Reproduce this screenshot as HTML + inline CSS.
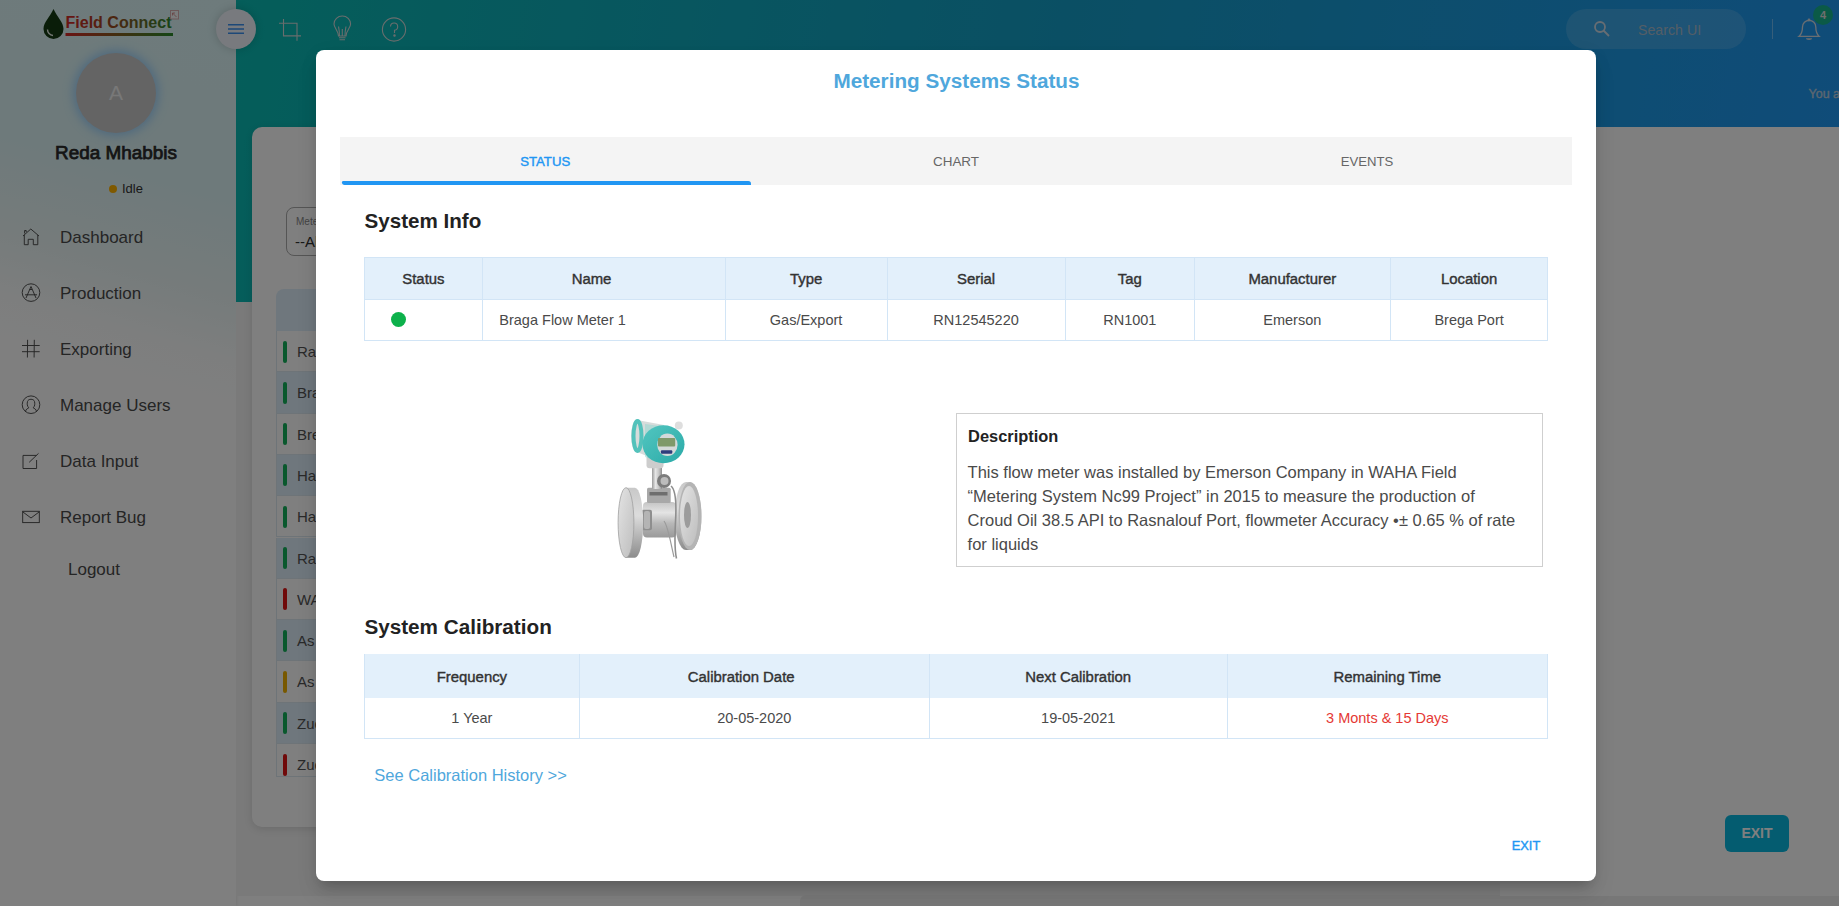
<!DOCTYPE html>
<html><head><meta charset="utf-8">
<style>
*{box-sizing:border-box;margin:0;padding:0}
html,body{width:1839px;height:906px;overflow:hidden;font-family:"Liberation Sans",sans-serif;background:#fff;position:relative}
.abs,.r,.t{position:absolute}
.t{line-height:1;white-space:nowrap}
#side{left:0;top:0;width:236px;height:906px;background:linear-gradient(196deg,#dcf6f8 0px,#dcf4f6 190px,#ecf7f7 290px,#fbfdfd 350px,#fff 400px,#fff 932px);box-shadow:1px 0 3px rgba(0,0,0,.08)}
#hdr{left:236px;top:0;width:1603px;height:302px;background:linear-gradient(100deg,#0abcb4 0%,#159fc8 50%,#2098f4 100%)}
#card{left:252px;top:127px;width:1300px;height:700px;background:#fff;border-radius:10px;box-shadow:0 2px 8px rgba(0,0,0,.12)}
#overlay{left:0;top:0;width:1839px;height:906px;background:rgba(0,0,0,.5)}
#modal{left:316px;top:50px;width:1280px;height:831px;background:#fff;border-radius:8px;box-shadow:0 9px 12px -6px rgba(0,0,0,.18),0 14px 22px 0 rgba(0,0,0,.08),0 4px 20px 0 rgba(0,0,0,.05)}
.nav{position:absolute;left:0;width:236px;height:30px;font-size:17px;color:#4a4a4a}
.nav span{position:absolute;left:60px;top:5px}
.nav svg{position:absolute;left:21px;top:5px}
.brow{position:absolute;left:276px;width:1250px;border-bottom:1px solid #dde8f0;border-left:1px solid #dde8f0}
.brow.alt{background:#deeefa}
.brow i{position:absolute;left:6px;top:9.5px;width:4px;height:22px;border-radius:2px;background:#0b8a45}
.brow span{position:absolute;left:20px;top:12px;font-size:15px;color:#555}
</style></head><body>
<div id="side" class="abs">
  <svg class="abs" style="left:0;top:0" width="236" height="50" viewBox="0 0 236 50">
    <defs><linearGradient id="ul" x1="0" x2="1"><stop offset="0" stop-color="#d42828"/><stop offset=".45" stop-color="#8a5a20"/><stop offset="1" stop-color="#2a8a2a"/></linearGradient>
    <linearGradient id="tx" gradientUnits="userSpaceOnUse" x1="65" x2="172" y1="0" y2="0"><stop offset="0" stop-color="#d42828"/><stop offset=".45" stop-color="#9a4a20"/><stop offset="1" stop-color="#2f8a2f"/></linearGradient></defs>
    <path d="M53.5 9 C 50 17, 43.5 22, 43.5 29 A 10 10 0 0 0 63.5 29 C 63.5 22, 57 17, 53.5 9 Z" fill="#153a12"/>
    <path d="M47.5 29.5 A 6 6 0 0 0 53 35.5" stroke="#e8f0e8" stroke-width="1.4" fill="none"/>
    <text x="65.5" y="28" font-family="Liberation Sans" font-weight="bold" font-size="16" textLength="106" lengthAdjust="spacingAndGlyphs" fill="url(#tx)">Field Connect</text>
    <rect x="65.5" y="33" width="107.5" height="3" fill="url(#ul)"/>
    <rect x="170.5" y="10.5" width="8" height="8.5" fill="#f4f8f8" stroke="#d8b0b0" stroke-width="1"/>
    <path d="M172.5 13 L176.5 17 M172.5 13 H175 M172.5 13 V15.5" stroke="#d08080" stroke-width=".8" fill="none"/>
  </svg>
  <div class="abs" style="left:76px;top:53px;width:80px;height:80px;border-radius:50%;background:#c8c8c8;box-shadow:0 0 10px 3px rgba(120,190,255,.6);color:#f0f0f0;font-size:21px;text-align:center;line-height:80px">A</div>
  <div class="abs" style="left:0;top:142px;width:232px;text-align:center;font-size:18.9px;font-weight:normal;-webkit-text-stroke:0.75px #2a2a2a;color:#2a2a2a">Reda Mhabbis</div>
  <div class="abs" style="left:109px;top:185px;width:8px;height:8px;border-radius:50%;background:#ffb300"></div>
  <div class="abs" style="left:122px;top:181px;font-size:13px;color:#333">Idle</div>
  <svg class="abs" style="left:0;top:220px" width="60" height="310" viewBox="0 220 60 310" fill="none" stroke="#4a4a4a" stroke-width="0.95">
    <path d="M23 236 L30.8 229 L39 236 M24.3 235 V244.7 H28.2 V239.3 H33.3 V244.7 H37.8 V235 M24.6 233.5 V230.5 H26.2 V232"/>
    <circle cx="31" cy="292.6" r="8.8"/><path d="M26 298 L31 286.5 L36 298 M25 294.8 H37 M29.5 289.5 L32 289.5"/>
    <path d="M27.6 339.8 L27.4 357.5 M34.3 339.8 L34.1 357.5 M22 345.5 H39.7 M22 351.7 H39.7"/>
    <circle cx="31" cy="404.7" r="8.8"/><path d="M25.5 411.8 C 25.5 409, 28 408.5, 28.8 407.8 C 27 406, 27 403.8, 27.5 401.5 C 28.2 398.5, 33.8 398.5, 34.5 401.5 C 35 403.8, 35 406, 33.2 407.8 C 34 408.5, 36.5 409, 36.5 411.8"/>
    <path d="M36.5 455.4 H23 V468.5 H36.6 V460 M29.2 462.3 L38.5 453.4"/>
    <rect x="22.7" y="511.3" width="16.6" height="11.3"/><path d="M22.7 511.8 L31 518 L39.3 511.8"/>
  </svg>
  <div class="nav" style="top:223px"><span>Dashboard</span></div>
  <div class="nav" style="top:279px"><span>Production</span></div>
  <div class="nav" style="top:335px"><span>Exporting</span></div>
  <div class="nav" style="top:391px"><span>Manage Users</span></div>
  <div class="nav" style="top:447px"><span>Data Input</span></div>
  <div class="nav" style="top:503px"><span>Report Bug</span></div>
  <div class="nav" style="top:555px"><span style="left:68px">Logout</span></div>
</div>

<div class="abs" style="left:236px;top:127px;width:1603px;height:769px;background:#f4f4f4"></div>
<div class="abs" style="left:800px;top:895px;width:1039px;height:11px;background:#eeeeee;border-radius:6px 0 0 0"></div>
<div class="abs" style="left:236px;top:0;width:1603px;height:302px;background:linear-gradient(100deg,#0abcb4 0%,#159fc8 50%,#2098f4 100%)"></div>
<div class="abs" style="left:1500px;top:127px;width:339px;height:769px;background:#fff"></div>
<div class="abs" style="left:216px;top:9px;width:40px;height:40px;border-radius:50%;background:#f0f5fc;box-shadow:0 0 10px rgba(0,0,0,.18)"></div>
<svg class="abs" style="left:228px;top:23px" width="16" height="12" viewBox="0 0 16 12"><path d="M0 1.8H16M0 6H16M0 10.2H16" stroke="#3a90f0" stroke-width="1.6"/></svg>
<svg class="abs" style="left:270px;top:10px" width="40" height="40" viewBox="270 10 40 40" fill="none" stroke="#d2dada" stroke-width="1.1"><path d="M283.5 19 V35.9 H301 M279 23.3 H297 V40.7"/></svg>
<svg class="abs" style="left:325px;top:10px" width="40" height="40" viewBox="325 10 40 40" fill="none" stroke="#d2dada" stroke-width="1.1"><path d="M338.5 36 C338.5 31 334 28 334 24 A8.3 8 0 0 1 350.6 24 C350.6 28 346 31 346 36 Z"/><path d="M339.5 36 C339.5 31 339 29 338.5 26.5 M345 36 C345 31 345.5 29 346 26.5 M342.3 36 V29"/><path d="M339 37.8 H345.5 M339.5 39.8 H345"/></svg>
<svg class="abs" style="left:375px;top:10px" width="40" height="40" viewBox="375 10 40 40" fill="none" stroke="#d2dada" stroke-width="1.1"><circle cx="394" cy="29.5" r="11.6"/><path d="M390.5 26.5 A3.6 3.6 0 1 1 394.5 30.2 V33"/><circle cx="394.5" cy="35.6" r="0.7" fill="#d2dada"/></svg>
<div class="abs" style="left:1566px;top:9px;width:180px;height:40px;border-radius:20px;background:rgba(255,255,255,.14)"></div>
<svg class="abs" style="left:1593px;top:20px" width="18" height="18" viewBox="0 0 18 18" fill="none" stroke="#cfdbe6" stroke-width="1.8"><circle cx="7" cy="7" r="5"/><path d="M10.5 10.5 L16 16"/></svg>
<div class="abs" style="left:1638px;top:22px;font-size:14.2px;color:#a8bccd">Search UI</div>
<div class="abs" style="left:1772px;top:19px;width:1px;height:20px;background:rgba(255,255,255,.35)"></div>
<svg class="abs" style="left:1790px;top:12px" width="36" height="34" viewBox="1790 12 36 34" fill="none" stroke="#d4dce4" stroke-width="1.3"><path d="M1798.9 36.4 H1819.2 C1816.5 34, 1815.8 31, 1815.8 27 A6.65 6.6 0 0 0 1802.5 27 C1802.5 31, 1801.8 34, 1798.9 36.4 Z"/><circle cx="1809" cy="20" r=".8" fill="#d4dce4"/><path d="M1806 38.2 H1812 A3 1.7 0 0 1 1806 38.2 Z" fill="#d4dce4" stroke="none"/></svg>
<div class="abs" style="left:1813px;top:5px;width:20px;height:20px;border-radius:50%;background:#16b48e;color:#ddd;font-size:11px;font-weight:bold;text-align:center;line-height:20px">4</div>
<div class="abs" style="left:1808.5px;top:87px;font-size:12.5px;color:#b8cde0;-webkit-text-stroke:0.4px #b8cde0;white-space:nowrap">You are</div>
<div id="card" class="abs"></div>
<!-- background content -->
<div class="abs" style="left:286px;top:207px;width:200px;height:49px;border:1px solid #aaa;border-radius:8px"></div>
<div class="abs" style="left:296px;top:216px;font-size:10px;color:#888">Meter</div>
<div class="abs" style="left:295px;top:233px;font-size:15px;color:#333">--All</div>
<div class="abs" style="left:1725px;top:815px;width:64px;height:37px;border-radius:6px;background:#08b8e0;color:#fff;font-size:14px;font-weight:bold;text-align:center;line-height:37px">EXIT</div>

<div class="abs" style="left:276px;top:289px;width:1250px;height:42px;background:#deeefa;border-radius:8px 8px 0 0"></div>
<div class="brow" style="top:331.0px;height:41.3px"><i style="background:#12b05a"></i><span>Ras</span></div>
<div class="brow alt" style="top:372.3px;height:41.3px"><i style="background:#12b05a"></i><span>Bra</span></div>
<div class="brow" style="top:413.6px;height:41.3px"><i style="background:#12b05a"></i><span>Bre</span></div>
<div class="brow alt" style="top:454.9px;height:41.3px"><i style="background:#12b05a"></i><span>Har</span></div>
<div class="brow" style="top:496.2px;height:41.3px"><i style="background:#12b05a"></i><span>Har</span></div>
<div class="brow alt" style="top:537.5px;height:41.3px"><i style="background:#12b05a"></i><span>Ras</span></div>
<div class="brow" style="top:578.8px;height:41.3px"><i style="background:#e01414"></i><span>WA</span></div>
<div class="brow alt" style="top:620.1px;height:41.3px"><i style="background:#12b05a"></i><span>As</span></div>
<div class="brow" style="top:661.4px;height:41.3px"><i style="background:#f0b000"></i><span>As</span></div>
<div class="brow alt" style="top:702.7px;height:41.3px"><i style="background:#12b05a"></i><span>Zue</span></div>
<div class="brow" style="top:744.0px;height:33px"><i style="background:#e01414"></i><span>Zue</span></div>

<div id="overlay" class="abs"></div>
<div id="modal" class="abs"></div>
<div class="t" style="left:556.5px;width:800px;text-align:center;top:71.08px;font-size:20.7px;font-weight:bold;color:#4fa7dc;">Metering Systems Status</div>
<div class="r" style="left:340px;top:137px;width:1232px;height:48px;background:#f4f4f4"></div>
<div class="r" style="left:342px;top:181px;width:409px;height:4px;background:#2196f3;border-radius:2px 4px 0 4px"></div>
<div class="t" style="left:145.2px;width:800px;text-align:center;top:154.73px;font-size:13.2px;font-weight:normal;color:#2196f3;-webkit-text-stroke:0.4px #2196f3;">STATUS</div>
<div class="t" style="left:556.0px;width:800px;text-align:center;top:154.51px;font-size:13.45px;font-weight:normal;color:#666;">CHART</div>
<div class="t" style="left:967.0px;width:800px;text-align:center;top:154.77px;font-size:13.15px;font-weight:normal;color:#666;">EVENTS</div>
<div class="t" style="left:364.5px;top:210.56px;font-size:20.6px;font-weight:bold;color:#222;">System Info</div>
<div class="r" style="left:364px;top:257px;width:1184px;height:42px;background:#e3f0fb"></div>
<div class="r" style="left:364px;top:257px;width:1184px;height:84px;border:1px solid #d2e5f6"></div>
<div class="r" style="left:364px;top:298.5px;width:1184px;height:1px;background:#d2e5f6"></div>
<div class="r" style="left:481.9px;top:257px;width:1px;height:84px;background:#d2e5f6"></div>
<div class="r" style="left:724.8px;top:257px;width:1px;height:84px;background:#d2e5f6"></div>
<div class="r" style="left:886.5px;top:257px;width:1px;height:84px;background:#d2e5f6"></div>
<div class="r" style="left:1064.8px;top:257px;width:1px;height:84px;background:#d2e5f6"></div>
<div class="r" style="left:1193.8px;top:257px;width:1px;height:84px;background:#d2e5f6"></div>
<div class="r" style="left:1389.9px;top:257px;width:1px;height:84px;background:#d2e5f6"></div>
<div class="t" style="left:23.4px;width:800px;text-align:center;top:271.89px;font-size:14.9px;font-weight:normal;color:#333;-webkit-text-stroke:0.4px #333;">Status</div>
<div class="t" style="left:191.5px;width:800px;text-align:center;top:271.89px;font-size:14.9px;font-weight:normal;color:#333;-webkit-text-stroke:0.4px #333;">Name</div>
<div class="t" style="left:406.1px;width:800px;text-align:center;top:271.89px;font-size:14.9px;font-weight:normal;color:#333;-webkit-text-stroke:0.4px #333;">Type</div>
<div class="t" style="left:576.1px;width:800px;text-align:center;top:271.89px;font-size:14.9px;font-weight:normal;color:#333;-webkit-text-stroke:0.4px #333;">Serial</div>
<div class="t" style="left:729.8px;width:800px;text-align:center;top:271.89px;font-size:14.9px;font-weight:normal;color:#333;-webkit-text-stroke:0.4px #333;">Tag</div>
<div class="t" style="left:892.3px;width:800px;text-align:center;top:271.89px;font-size:14.9px;font-weight:normal;color:#333;-webkit-text-stroke:0.4px #333;">Manufacturer</div>
<div class="t" style="left:1069.1px;width:800px;text-align:center;top:271.89px;font-size:14.9px;font-weight:normal;color:#333;-webkit-text-stroke:0.4px #333;">Location</div>
<div class="t" style="left:499.3px;top:312.93px;font-size:14.5px;font-weight:normal;color:#4a4a4a;">Braga Flow Meter 1</div>
<div class="t" style="left:406.1px;width:800px;text-align:center;top:312.93px;font-size:14.5px;font-weight:normal;color:#4a4a4a;">Gas/Export</div>
<div class="t" style="left:576.1px;width:800px;text-align:center;top:312.93px;font-size:14.5px;font-weight:normal;color:#4a4a4a;">RN12545220</div>
<div class="t" style="left:729.8px;width:800px;text-align:center;top:312.93px;font-size:14.5px;font-weight:normal;color:#4a4a4a;">RN1001</div>
<div class="t" style="left:892.3px;width:800px;text-align:center;top:312.93px;font-size:14.5px;font-weight:normal;color:#4a4a4a;">Emerson</div>
<div class="t" style="left:1069.1px;width:800px;text-align:center;top:312.93px;font-size:14.5px;font-weight:normal;color:#4a4a4a;">Brega Port</div>
<div class="r" style="left:390.9px;top:311.7px;width:15.3px;height:15.3px;border-radius:50%;background:#0db14b"></div>
<svg class="abs" style="left:600px;top:405px" width="120" height="170" viewBox="600 405 120 170">
<defs>
<linearGradient id="mg1" x1="0" x2="1"><stop offset="0" stop-color="#9a9a9a"/><stop offset=".35" stop-color="#e6e6e6"/><stop offset=".7" stop-color="#c4c4c4"/><stop offset="1" stop-color="#8e8e8e"/></linearGradient>
<linearGradient id="rim" x1="0" x2="0" y1="0" y2="1"><stop offset="0" stop-color="#c8c8c8"/><stop offset=".4" stop-color="#dcdcdc"/><stop offset="1" stop-color="#8c8c8c"/></linearGradient>
<linearGradient id="mg3" x1="0" x2="0" y1="0" y2="1"><stop offset="0" stop-color="#c4c4c4"/><stop offset=".3" stop-color="#e4e4e4"/><stop offset=".6" stop-color="#b8b8b8"/><stop offset="1" stop-color="#9a9a9a"/></linearGradient>
<linearGradient id="face" x1="0" x2="1" y1="0" y2="1"><stop offset="0" stop-color="#e4e4e4"/><stop offset="1" stop-color="#bdbdbd"/></linearGradient>
<linearGradient id="tg" x1="0" x2="1" y1="0" y2="1"><stop offset="0" stop-color="#52c6c0"/><stop offset="1" stop-color="#2aaaa8"/></linearGradient>
<filter id="bl" x="-10%" y="-10%" width="120%" height="120%"><feGaussianBlur stdDeviation="0.55"/></filter>
</defs>
<g filter="url(#bl)">
<!-- right flange: rim + face -->
<path d="M686 482 L690 482 A 11.5 34 0 0 1 690 550 L686 550 A 11.5 34 0 0 1 686 482 Z" fill="url(#rim)"/>
<ellipse cx="690" cy="516" rx="11.5" ry="34" fill="#b4b4b4"/>
<ellipse cx="689" cy="516" rx="9" ry="30" fill="url(#face)"/>
<ellipse cx="687.5" cy="515" rx="3.5" ry="13" fill="#9c9c9c"/>
<!-- body -->
<rect x="643" y="502" width="33" height="35.5" rx="4" fill="url(#mg3)"/>
<!-- left stub -->
<rect x="641.5" y="509.7" width="10.5" height="20.5" rx="2" fill="#8e8e8e"/>
<rect x="644" y="511" width="6" height="18" rx="2" fill="#b4b4b4"/>
<!-- left flange rim -->
<path d="M626 487.7 L635 487.7 A 8.2 35 0 0 1 635 557.7 L626 557.7 Z" fill="url(#rim)"/>
<!-- left flange face -->
<ellipse cx="626" cy="522.7" rx="7.9" ry="35" fill="url(#face)"/>
<ellipse cx="626" cy="522.7" rx="7.9" ry="35" fill="none" stroke="#a0a0a0" stroke-width=".8"/>
<!-- block -->
<rect x="647" y="487.7" width="23.7" height="15.3" rx="1.5" fill="#a8a8a8"/>
<rect x="649.5" y="492" width="18" height="3.5" fill="#6e6e6e"/>
<!-- stem -->
<rect x="652" y="466" width="10" height="23" fill="url(#mg1)"/>
<!-- connector -->
<circle cx="664" cy="481" r="7" fill="#7c7c7c"/>
<circle cx="664.5" cy="481" r="4" fill="#bcbcbc"/>
<!-- wire -->
<path d="M671 486 C 676 490, 676.5 505, 675.5 522 C 674.5 540, 675 552, 676.5 558.5" fill="none" stroke="#8e8e8e" stroke-width="1.6"/>
<path d="M664 521 C 668 526, 670 540, 674 557" fill="none" stroke="#9a9a9a" stroke-width="1.2"/>
<!-- neck -->
<rect x="646.5" y="455" width="17" height="13.3" rx="3" fill="#cdcdcd"/>
<!-- head back cylinder -->
<path d="M637 420 L664 425 L664 463 L637 452 A 6 16 0 0 1 637 420 Z" fill="#d6dcdb"/>
<ellipse cx="637.5" cy="436" rx="4" ry="15" fill="none" stroke="#52c2bb" stroke-width="4"/>
<path d="M645 424 L660 426 L660 462 L645 457 Z" fill="#8fd6cf" opacity=".5"/>
<!-- top knob -->
<circle cx="678.8" cy="425.6" r="4" fill="#dedede"/>
<!-- front ring -->
<ellipse cx="663.5" cy="444.2" rx="21" ry="19" fill="url(#tg)"/>
<ellipse cx="667.4" cy="444.8" rx="10.2" ry="11.2" fill="#d4d9d9"/>
<rect x="658" y="438" width="17.2" height="8.6" rx="1" fill="#7f996b"/>
<rect x="660.9" y="450.2" width="11.4" height="3.6" rx="1" fill="#2f3d7c"/>
</g>
</svg>
<div class="r" style="left:956px;top:413px;width:587px;height:154px;border:1px solid #cfcfcf"></div>
<div class="t" style="left:968.1px;top:427.92px;font-size:16.4px;font-weight:bold;color:#222;">Description</div>
<div class="t" style="left:967.6px;top:463.63px;font-size:16.5px;font-weight:normal;color:#4a4a4a;white-space:nowrap">This flow meter was installed by Emerson Company in WAHA Field</div>
<div class="t" style="left:967.6px;top:487.63px;font-size:16.5px;font-weight:normal;color:#4a4a4a;white-space:nowrap">&#8220;Metering System Nc99 Project&#8221; in 2015 to measure the production of</div>
<div class="t" style="left:967.6px;top:511.63px;font-size:16.5px;font-weight:normal;color:#4a4a4a;white-space:nowrap">Croud Oil 38.5 API to Rasnalouf Port, flowmeter Accuracy &#8226;&#177; 0.65 % of rate</div>
<div class="t" style="left:967.6px;top:535.63px;font-size:16.5px;font-weight:normal;color:#4a4a4a;white-space:nowrap">for liquids</div>
<div class="t" style="left:364.4px;top:616.78px;font-size:20.7px;font-weight:bold;color:#222;">System Calibration</div>
<div class="r" style="left:364px;top:654px;width:1184px;height:43.6px;background:#e3f0fb"></div>
<div class="r" style="left:364px;top:654px;width:1184px;height:84.5px;border:1px solid #d2e5f6;border-top:none"></div>
<div class="r" style="left:578.8px;top:654px;width:1px;height:84.5px;background:#d2e5f6"></div>
<div class="r" style="left:928.8px;top:654px;width:1px;height:84.5px;background:#d2e5f6"></div>
<div class="r" style="left:1226.5px;top:654px;width:1px;height:84.5px;background:#d2e5f6"></div>
<div class="t" style="left:71.9px;width:800px;text-align:center;top:669.99px;font-size:14.9px;font-weight:normal;color:#333;-webkit-text-stroke:0.4px #333;">Frequency</div>
<div class="t" style="left:341.2px;width:800px;text-align:center;top:669.99px;font-size:14.9px;font-weight:normal;color:#333;-webkit-text-stroke:0.4px #333;">Calibration Date</div>
<div class="t" style="left:678.2px;width:800px;text-align:center;top:669.99px;font-size:14.9px;font-weight:normal;color:#333;-webkit-text-stroke:0.4px #333;">Next Calibration</div>
<div class="t" style="left:987.3px;width:800px;text-align:center;top:669.99px;font-size:14.9px;font-weight:normal;color:#333;-webkit-text-stroke:0.4px #333;">Remaining Time</div>
<div class="t" style="left:71.9px;width:800px;text-align:center;top:711.23px;font-size:14.5px;font-weight:normal;color:#4a4a4a;">1 Year</div>
<div class="t" style="left:354.3px;width:800px;text-align:center;top:711.23px;font-size:14.5px;font-weight:normal;color:#4a4a4a;">20-05-2020</div>
<div class="t" style="left:678.2px;width:800px;text-align:center;top:711.23px;font-size:14.5px;font-weight:normal;color:#4a4a4a;">19-05-2021</div>
<div class="t" style="left:987.3px;width:800px;text-align:center;top:711.23px;font-size:14.5px;font-weight:normal;color:#e53935;">3 Monts &amp; 15 Days</div>
<div class="t" style="left:374.3px;top:767.23px;font-size:16.5px;font-weight:normal;color:#4fa7dc;">See Calibration History &gt;&gt;</div>
<div class="t" style="left:1126.0px;width:800px;text-align:center;top:839.66px;font-size:12.8px;font-weight:normal;color:#2196f3;-webkit-text-stroke:0.4px #2196f3;">EXIT</div>

</body></html>
